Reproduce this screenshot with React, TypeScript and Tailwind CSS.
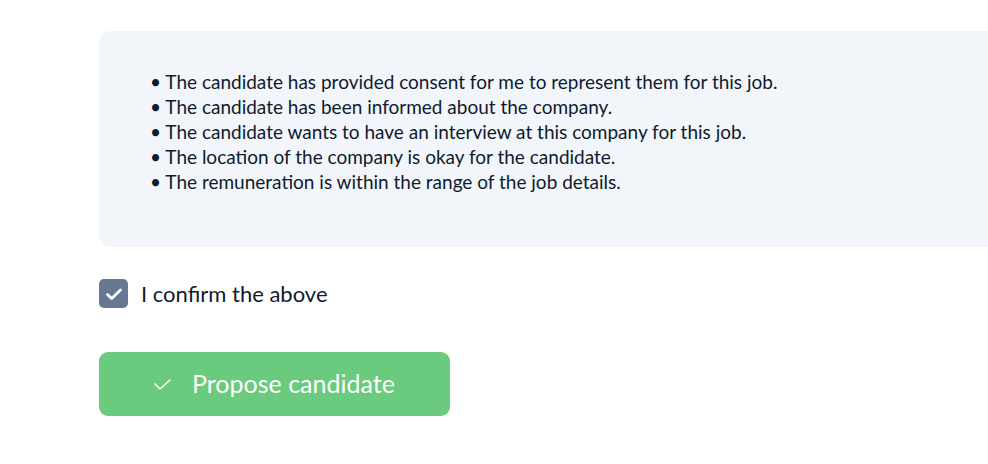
import React from "react";

const items = [
  "The candidate has provided consent for me to represent them for this job.",
  "The candidate has been informed about the company.",
  "The candidate wants to have an interview at this company for this job.",
  "The location of the company is okay for the candidate.",
  "The remuneration is within the range of the job details.",
];

export default function App() {
  return (
    <div
      className="w-[988px] h-[464px] bg-white overflow-hidden"
      style={{ fontFamily: "Lato, 'Noto Sans', sans-serif" }}
    >
      <div className="pl-[99px] pt-[31px]">
        <div className="bg-[#f2f6fb] rounded-l-xl h-[216px] pl-[51px] pt-[38px] text-[19px] leading-[25px] text-[#0f1b2d]">
          {items.map((t) => (
            <div key={t}>• {t}</div>
          ))}
        </div>
        <div className="flex items-center h-[29px] mt-[32px] gap-[13px]">
          <div className="w-[29px] h-[29px] rounded-[5px] bg-[#667791] flex items-center justify-center">
            <svg width="18" height="18" viewBox="0 0 18 18" fill="none">
              <path d="M2.5 9.5l4.2 4L15.5 5" stroke="white" strokeWidth="2.8" strokeLinecap="round" strokeLinejoin="round" />
            </svg>
          </div>
          <span className="text-[22px] leading-[29px] text-[#0f1b2d]">I confirm the above</span>
        </div>
        <button className="mt-[44px] w-[351px] h-[64px] rounded-[9px] bg-[#6aca7d] flex items-center pl-[55px] text-white">
          <svg width="17" height="11" viewBox="0 0 17 11" fill="none">
            <path d="M1 5l5 5L16 1" stroke="white" strokeWidth="1.6" strokeLinecap="round" strokeLinejoin="round" />
          </svg>
          <span className="ml-[21px] text-[25px]">Propose candidate</span>
        </button>
      </div>
    </div>
  );
}
